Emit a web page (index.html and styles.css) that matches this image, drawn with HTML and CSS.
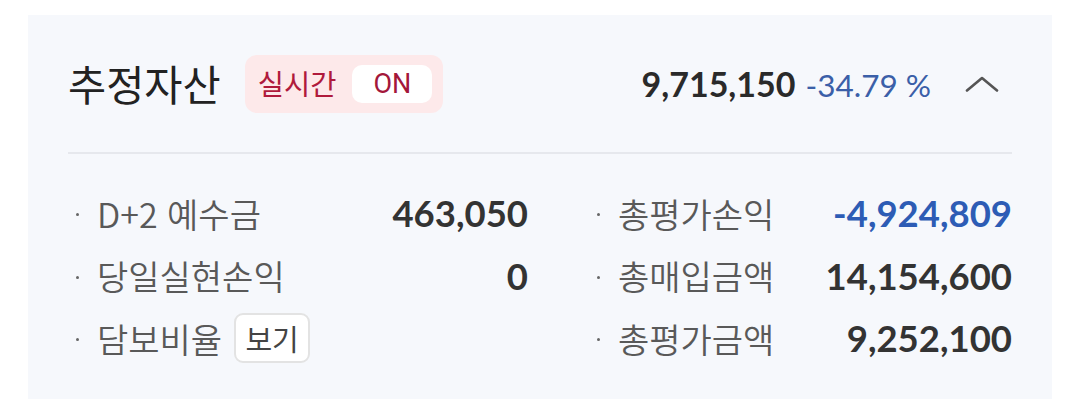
FILE: index.html
```html
<!DOCTYPE html>
<html lang="ko">
<head>
<meta charset="utf-8">
<link rel="stylesheet" href="styles.css">
</head>
<body>
<section class="card">
  <header class="head">
    <h1 class="title">추정자산</h1>
    <div class="badge"><span class="badge-label">실시간</span><span class="badge-on">ON</span></div>
    <div class="summary">
      <span class="total">9,715,150</span>
      <span class="rate">-34.79 %</span>
    </div>
    <svg class="chevron" width="34" height="16" viewBox="0 0 34 16" aria-hidden="true">
      <polyline points="2,14.5 17,2 32,14.5" fill="none" stroke="#555" stroke-width="2.6" stroke-linecap="round" stroke-linejoin="round"/>
    </svg>
  </header>
  <div class="grid">
    <div class="row"><span class="label">D+2 예수금</span><span class="val">463,050</span></div>
    <div class="row"><span class="label">총평가손익</span><span class="val neg">-4,924,809</span></div>
    <div class="row"><span class="label">당일실현손익</span><span class="val">0</span></div>
    <div class="row"><span class="label">총매입금액</span><span class="val">14,154,600</span></div>
    <div class="row"><span class="label">담보비율<button class="view">보기</button></span><span class="val"></span></div>
    <div class="row"><span class="label">총평가금액</span><span class="val">9,252,100</span></div>
  </div>
</section>
</body>
</html>
```

FILE: styles.css
```css
html, body {
  margin: 0;
  padding: 0;
  background: #ffffff;
}
body {
  padding: 15px 28px 0 28px;
  font-family: "Noto Sans CJK KR", "Noto Sans", sans-serif;
}
.card {
  background: #f6f8fc;
  padding: 0 40px 29.5px 40px;
}
.head {
  height: 137px;
  display: flex;
  align-items: center;
  border-bottom: 2px solid #e6e8ed;
}
.title {
  margin: 0;
  font-size: 41.5px;
  font-weight: 400;
  color: #222;
  line-height: 1;
}
.badge {
  margin-left: 24px;
  height: 58px;
  box-sizing: border-box;
  background: #fde9ea;
  border-radius: 12px;
  display: flex;
  align-items: center;
  padding: 0 11px 0 13px;
}
.badge-label {
  font-size: 28.5px;
  color: #b01a3c;
  line-height: 1;
}
.badge-on {
  margin-left: 16px;
  width: 80px;
  height: 38px;
  background: #fff;
  border-radius: 10px;
  display: flex;
  align-items: center;
  justify-content: center;
  font-family: Roboto, "Noto Sans", sans-serif;
  font-size: 27px;
  color: #a3173a;
}
.summary {
  margin-left: auto;
  display: flex;
  align-items: baseline;
  gap: 10px;
  font-family: Lato, sans-serif;
}
.total {
  font-size: 34px;
  font-weight: 700;
  color: #2a2a2a;
}
.rate {
  font-size: 31.5px;
  color: #3b5fa8;
}
.chevron {
  margin-left: 34px;
  margin-right: 13px;
  display: block;
}
.grid {
  display: grid;
  grid-template-columns: 460px 1fr;
  column-gap: 61px;
  padding-top: 28px;
}
.row {
  height: 62.5px;
  display: flex;
  align-items: center;
  justify-content: space-between;
}
.label {
  position: relative;
  padding-left: 29px;
  font-size: 34px;
  font-weight: 350;
  color: #595959;
  display: flex;
  align-items: center;
  white-space: pre;
}
.label::before {
  content: "";
  position: absolute;
  left: 8px;
  top: 50%;
  width: 3px;
  height: 3px;
  border-radius: 50%;
  background: #666;
}
.val {
  font-family: Lato, sans-serif;
  font-weight: 700;
  font-size: 36.5px;
  color: #333;
}
.val.neg {
  color: #2d5cb5;
}
.view {
  margin-left: 12px;
  width: 76px;
  height: 50px;
  box-sizing: border-box;
  background: #fff;
  border: 2px solid #e3e3e3;
  border-radius: 9px;
  font-family: "Noto Sans CJK KR", sans-serif;
  font-size: 29px;
  font-weight: 400;
  color: #444;
  padding: 0;
  display: flex;
  align-items: center;
  justify-content: center;
}
```
